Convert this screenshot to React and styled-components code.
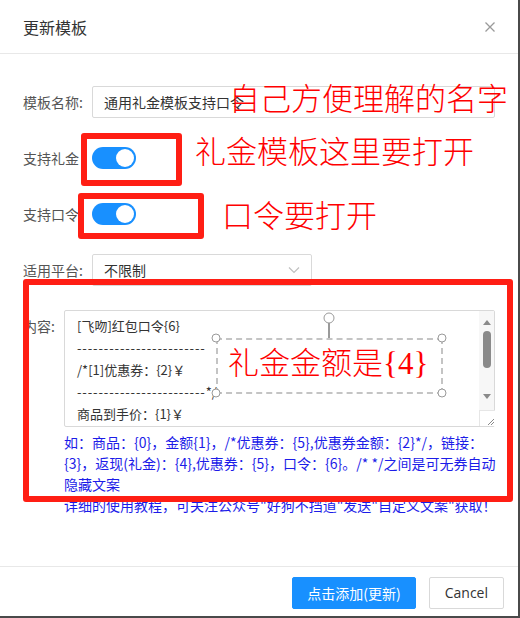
import React from "react";
import styled, { createGlobalStyle } from "styled-components";

const colors = {
  text: "#333333",
  label: "#555555",
  border: "#d9d9d9",
  divider: "#e8e8e8",
  primary: "#1890ff",
  mark: "#ff1e14",
  ink: "#ff0000",
  hint: "#1c1ce8",
};

const GlobalStyle = createGlobalStyle`
  body {
    margin: 0;
    background: #ffffff;
    font-family: "Noto Sans CJK SC", "Liberation Sans", sans-serif;
  }
`;

const Frame = styled.div`
  position: relative;
  width: 520px;
  height: 618px;
  box-sizing: border-box;
  border-right: 2px solid #4a4a4a;
  border-bottom: 2px solid #4a4a4a;
  background: #fff;
  display: flex;
  flex-direction: column;
  overflow: hidden;
`;

const Header = styled.div`
  height: 53px;
  border-bottom: 1px solid ${colors.divider};
  display: flex;
  align-items: center;
  justify-content: space-between;
  padding: 0 22px 0 23px;
  flex-shrink: 0;
`;

const Title = styled.div`
  font-size: 16px;
  color: ${colors.text};
  line-height: 22px;
`;

const Body = styled.div`
  flex: 1;
  padding: 32px 23px 0 23px;
`;

const Row = styled.div`
  display: flex;
  align-items: ${(p) => (p.$top ? "flex-start" : "center")};
  min-height: 32px;
  margin-bottom: ${(p) => (p.$last ? "0" : "24px")};
`;

const Label = styled.div`
  width: ${(p) => p.$width || "69px"};
  flex-shrink: 0;
  font-size: 14px;
  line-height: 32px;
  color: ${colors.label};
  white-space: nowrap;
`;

const Input = styled.div`
  width: 403px;
  height: 32px;
  box-sizing: border-box;
  border: 1px solid ${colors.border};
  border-radius: 2px;
  padding: 0 11px;
  font-size: 14px;
  line-height: 30px;
  color: ${colors.text};
`;

const Select = styled(Input)`
  width: 220px;
  display: flex;
  align-items: center;
  justify-content: space-between;
`;

const Switch = styled.div`
  width: 44px;
  height: 22px;
  border-radius: 11px;
  background: ${colors.primary};
  position: relative;

  &::after {
    content: "";
    position: absolute;
    right: 2px;
    top: 2px;
    width: 18px;
    height: 18px;
    border-radius: 50%;
    background: #fff;
  }
`;

const Column = styled.div`
  display: flex;
  flex-direction: column;
`;

const TextArea = styled.div`
  width: 431px;
  height: 117px;
  box-sizing: border-box;
  border: 1px solid ${colors.border};
  border-radius: 2px;
  display: flex;
`;

const TextContent = styled.div`
  flex: 1;
  padding: 4px 12px;
  font-size: 13px;
  line-height: 22px;
  color: ${colors.text};
  overflow: hidden;
  white-space: nowrap;
`;

const Dashes = styled.span`
  letter-spacing: 0.85px;
`;

const ScrollBar = styled.div`
  width: 15px;
  background: #f7f7f7;
  display: flex;
  flex-direction: column;
  align-items: center;
`;

const Arrow = styled.div`
  width: 0;
  height: 0;
  border-left: 4px solid transparent;
  border-right: 4px solid transparent;
  ${(p) =>
    p.$down
      ? `border-top: 5px solid #8a8a8a; margin-top: 26px;`
      : `border-bottom: 5px solid #8a8a8a; margin-top: 9px;`}
`;

const Thumb = styled.div`
  width: 8px;
  height: 37px;
  border-radius: 4px;
  background: #8a8a8a;
  margin-top: 6px;
`;

const Grip = styled.div`
  width: 15px;
  height: 15px;
  margin-top: auto;
  background: #fff;
  border-top: 1px solid #e6e6e6;
  border-left: 1px solid #e6e6e6;
  display: flex;
  align-items: flex-end;
  justify-content: flex-end;
`;

const Hint = styled.div`
  margin-top: 5px;
  font-size: 14px;
  line-height: 21px;
  color: ${colors.hint};
  white-space: nowrap;
`;

const Footer = styled.div`
  height: 50px;
  box-sizing: border-box;
  flex-shrink: 0;
  border-top: 1px solid ${colors.divider};
  display: flex;
  justify-content: flex-end;
  align-items: flex-start;
  gap: 13px;
  padding: 10px 14px 0 0;
`;

const Button = styled.div`
  height: 32px;
  box-sizing: border-box;
  padding: 0 ${(p) => (p.$primary ? "14px" : "15px")};
  border-radius: 2px;
  font-size: 14px;
  line-height: 30px;
  border: 1px solid ${(p) => (p.$primary ? colors.primary : colors.border)};
  background: ${(p) => (p.$primary ? colors.primary : "#fff")};
  color: ${(p) => (p.$primary ? "#fff" : colors.text)};
  font-family: ${(p) =>
    p.$primary ? `"Noto Sans CJK SC", sans-serif` : `"Open Sans", "Noto Sans CJK SC", sans-serif`};
`;

/* red marks drawn over the screenshot */
const MarkBox = styled.div`
  position: absolute;
  box-sizing: border-box;
  border: 6px solid ${colors.mark};
  border-radius: 3px;
  pointer-events: none;
`;

const MarkText = styled.div`
  position: absolute;
  font-family: "Liberation Serif", "Noto Sans CJK SC", serif;
  font-size: 31px;
  font-weight: 300;
  line-height: 1;
  color: ${colors.ink};
  white-space: nowrap;
`;

const Frame2 = styled.div`
  position: absolute;
  box-sizing: border-box;
  border: 2px dashed #c4c4c4;
`;

const Handle = styled.div`
  position: absolute;
  width: ${(p) => p.$size || 9}px;
  height: ${(p) => p.$size || 9}px;
  box-sizing: border-box;
  border: 1.5px solid #9a9a9a;
  border-radius: 50%;
  background: #fff;
  transform: translate(-50%, -50%);
`;

const Stem = styled.div`
  position: absolute;
  width: 2px;
  background: #9a9a9a;
`;

function CloseIcon() {
  return (
    <svg width="12" height="12" viewBox="0 0 12 12">
      <path d="M1.5 1.5 L10.5 10.5 M10.5 1.5 L1.5 10.5" stroke="#9a9a9a" strokeWidth="1.3" />
    </svg>
  );
}

function Chevron() {
  return (
    <svg width="12" height="8" viewBox="0 0 12 8">
      <path d="M1 1.5 L6 6.5 L11 1.5" stroke="#c0c0c0" strokeWidth="1.2" fill="none" />
    </svg>
  );
}

function GripLines() {
  return (
    <svg width="10" height="10" viewBox="0 0 10 10">
      <path d="M9 3 L3 9 M9 6 L6 9" stroke="#8a8a8a" strokeWidth="1" />
    </svg>
  );
}

export default function App() {
  return (
    <>
      <GlobalStyle />
      <Frame>
        <Header>
          <Title>更新模板</Title>
          <CloseIcon />
        </Header>
        <Body>
          <Row>
            <Label>模板名称:</Label>
            <Input>通用礼金模板支持口令</Input>
          </Row>
          <Row>
            <Label>支持礼金</Label>
            <Switch />
          </Row>
          <Row>
            <Label>支持口令</Label>
            <Switch />
          </Row>
          <Row>
            <Label>适用平台:</Label>
            <Select>
              不限制
              <Chevron />
            </Select>
          </Row>
          <Row $top $last>
            <Label $width="41px">内容:</Label>
            <Column>
              <TextArea>
                <TextContent>
                  [飞吻]红包口令{"{6}"}
                  <br />
                  <Dashes>------------------------</Dashes>
                  <br />
                  /*[1]优惠券：{"{2}"}￥
                  <br />
                  <Dashes>------------------------</Dashes>*/
                  <br />
                  商品到手价：{"{1}"}￥
                </TextContent>
                <ScrollBar>
                  <Arrow />
                  <Thumb />
                  <Arrow $down />
                  <Grip>
                    <GripLines />
                  </Grip>
                </ScrollBar>
              </TextArea>
              <Hint>
                如：商品：{"{0}"}，金额{"{1}"}，/*优惠券：{"{5}"},优惠券金额：{"{2}"}*/，链接：
                <br />
                {"{3}"}，返现(礼金)：{"{4}"},优惠券：{"{5}"}，口令：{"{6}"}。/* */之间是可无券自动
                <br />
                隐藏文案
                <br />
                详细的使用教程，可关注公众号"好狗不挡道"发送"自定义文案"获取！
              </Hint>
            </Column>
          </Row>
        </Body>
        <Footer>
          <Button $primary>点击添加(更新)</Button>
          <Button>Cancel</Button>
        </Footer>

        <Stem style={{ left: 328, top: 323, height: 15 }} />
        <Frame2 style={{ left: 216, top: 338, width: 227, height: 56 }} />
        <Handle $size={11} style={{ left: 329, top: 318 }} />
        <Handle style={{ left: 216, top: 338 }} />
        <Handle style={{ left: 442, top: 338 }} />
        <Handle style={{ left: 216, top: 393 }} />
        <Handle style={{ left: 442, top: 393 }} />
        <MarkText style={{ left: 228, top: 348 }}>礼金金额是{"{4}"}</MarkText>

        <MarkText style={{ left: 229, top: 84 }}>自己方便理解的名字</MarkText>
        <MarkText style={{ left: 195, top: 137 }}>礼金模板这里要打开</MarkText>
        <MarkText style={{ left: 222, top: 201 }}>口令要打开</MarkText>

        <MarkBox style={{ left: 81, top: 133, width: 101, height: 53 }} />
        <MarkBox style={{ left: 78, top: 193, width: 126, height: 46 }} />
        <MarkBox style={{ left: 23, top: 279, width: 490, height: 223 }} />
      </Frame>
    </>
  );
}
